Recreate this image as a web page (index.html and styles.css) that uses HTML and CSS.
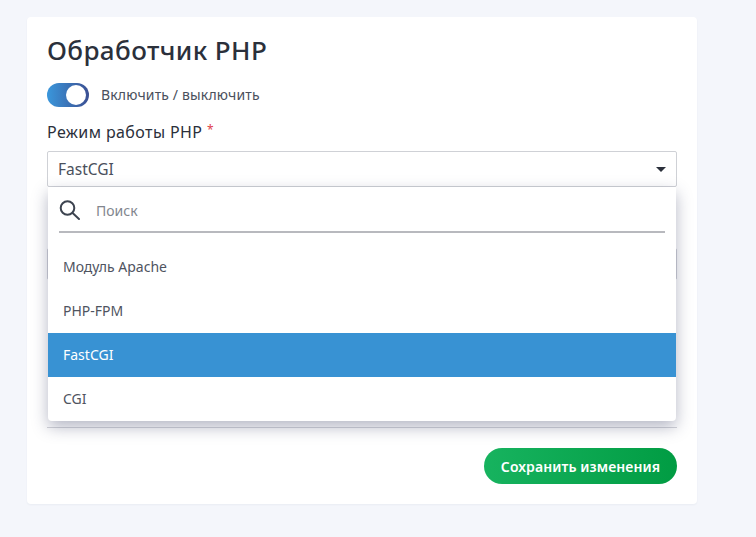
FILE: index.html
```html
<!DOCTYPE html>
<html lang="ru">
<head>
<meta charset="utf-8">
<title>Обработчик PHP</title>
<link rel="stylesheet" href="styles.css">
</head>
<body>
<main class="card">
  <h1 class="title">Обработчик PHP</h1>
  <div class="toggle-row">
    <span class="toggle"><span class="knob"></span></span>
    <span class="toggle-label">Включить / выключить</span>
  </div>
  <div class="field-label">Режим работы PHP <span class="req">*</span></div>
  <div class="select-wrap">
    <div class="select">
      <span class="select-value">FastCGI</span>
      <span class="caret"></span>
    </div>
    <div class="dropdown">
      <div class="search">
        <svg class="search-icon" width="22" height="22" viewBox="0 0 22 22" fill="none" stroke="#3d4450" stroke-width="2" stroke-linecap="round"><circle cx="8.5" cy="9" r="6.8"/><path d="M13.6 14.1 20 20"/></svg>
        <span class="search-text">Поиск</span>
      </div>
      <ul class="options">
        <li class="option">Модуль Apache</li>
        <li class="option">PHP-FPM</li>
        <li class="option active">FastCGI</li>
        <li class="option">CGI</li>
      </ul>
    </div>
  </div>
  <div class="hidden-field"></div>
  <div class="hidden-area"></div>
  <div class="actions">
    <button class="save" type="button">Сохранить изменения</button>
  </div>
</main>
</body>
</html>
```
FILE: styles.css
```css
* { box-sizing: border-box; }
html, body { margin: 0; height: 100%; }
body {
  background: #f4f6fb;
  font-family: "Noto Sans", "Open Sans", sans-serif;
  color: #2b303b;
  padding: 17px 59px 33px 27px;
  overflow: hidden;
}
.card {
  width: 670px;
  height: 487px;
  background: #fff;
  border-radius: 4px;
  padding: 14px 20px 20px;
  box-shadow: 0 1px 2px rgba(40, 50, 90, 0.05);
}
.title {
  margin: 0;
  height: 38px;
  font-size: 26px;
  line-height: 38px;
  font-weight: 500;
  letter-spacing: 0.4px;
  color: #2b303b;
}
.toggle-row {
  display: flex;
  align-items: center;
  gap: 12px;
  margin-top: 14px;
  height: 24px;
}
.toggle {
  display: flex;
  align-items: center;
  justify-content: flex-end;
  width: 42px;
  height: 24px;
  padding-right: 3px;
  border-radius: 12px;
  background: linear-gradient(90deg, #3a97dc, #3b4f92);
}
.knob {
  width: 20px;
  height: 20px;
  border-radius: 50%;
  background: #fff;
}
.toggle-label {
  position: relative;
  top: -1px;
  font-size: 14px;
  letter-spacing: 0.15px;
  color: #4a505c;
}
.field-label {
  margin-top: 14px;
  height: 22px;
  font-size: 16px;
  line-height: 22px;
  letter-spacing: 0.4px;
  color: #2b303b;
}
.req {
  position: relative;
  top: -4px;
  font-size: 12px;
  color: #e0404a;
}
.select-wrap {
  position: relative;
  margin-top: 8px;
}
.select {
  display: flex;
  align-items: center;
  justify-content: space-between;
  height: 36px;
  padding: 0 10px;
  background: #fff;
  border: 1px solid #cfd1d6;
  border-radius: 2px;
  color: #4a505c;
}
.select-value {
  font-size: 15.5px;
}
.caret {
  width: 0;
  height: 0;
  border-left: 5px solid transparent;
  border-right: 5px solid transparent;
  border-top: 5px solid #2b303b;
}
.dropdown {
  position: absolute;
  z-index: 2;
  top: 36px;
  left: 1px;
  right: 1px;
  background: #fff;
  border-radius: 0 0 4px 4px;
  box-shadow: 0 6px 16px rgba(50, 55, 95, 0.36);
}
.search {
  display: flex;
  align-items: center;
  height: 46px;
  padding-top: 2px;
  margin: 0 11px;
  border-bottom: 2px solid #b8b9be;
}
.search-text {
  margin-left: 15px;
  font-size: 14px;
  color: #82868e;
}
.options {
  list-style: none;
  margin: 12px 0 0;
  padding: 0;
}
.option {
  height: 44px;
  padding: 0 15px;
  font-size: 14px;
  line-height: 44px;
  color: #4f545f;
}
.option.active {
  background: #3892d3;
  color: #fff;
}
.option:last-child { border-radius: 0 0 4px 4px; }
.hidden-field {
  height: 32px;
  margin-top: 61px;
  border: 1px solid #cfd1d6;
  border-radius: 2px;
}
.hidden-area {
  height: 148px;
  border-bottom: 1px solid #d4d5da;
}
.actions {
  display: flex;
  justify-content: flex-end;
  margin-top: 20px;
}
.save {
  width: 193px;
  height: 36px;
  border: 0;
  border-radius: 18px;
  background: linear-gradient(90deg, #17b35f, #019c43);
  color: #fff;
  font-family: inherit;
  font-size: 14px;
  font-weight: 600;
  letter-spacing: 0.1px;
}
```
